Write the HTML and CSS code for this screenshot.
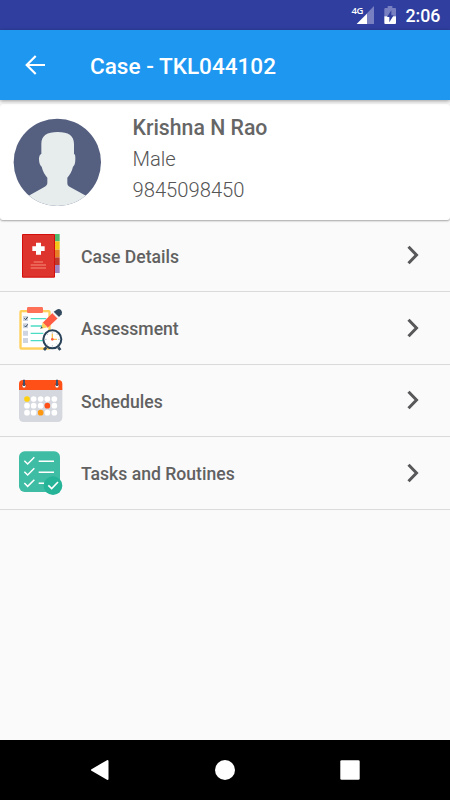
FILE: index.html
```html
<!DOCTYPE html>
<html lang="en">
<head>
<meta charset="utf-8">
<title>Case</title>
<link rel="stylesheet" href="styles.css">
</head>
<body>
<div class="screen">
  <div class="status">
    <svg class="status-icons" width="50" height="30" viewBox="0 0 150 90">
      <path d="M60 18v54H8z" fill="#7980c1"/>
      <path d="M39 41v31H8z" fill="#fff"/>
      <g transform="translate(-9)">
        <path d="M103 24h7v-6h14v6h8q3 0 3 3v22h-35V27q0-3 3-3z" fill="#7980c1"/>
        <path d="M100 49h35v20q0 3-3 3h-29q-3 0-3-3z" fill="#fff"/>
        <path d="m121 31-13 20h7v16l13-21h-7z" fill="#303f9f"/>
      </g>
    </svg>
    <span class="network">4G</span>
    <span class="clock">2:06</span>
  </div>
  <header class="appbar">
    <svg class="back" width="20" height="20" viewBox="0 0 20 20" fill="none" stroke="#fff" stroke-width="2.2"><path d="M20 10H2M10.700 1 1.700 10l9 9"/></svg>
    <h1>Case - TKL044102</h1>
  </header>
  <section class="card">
    <svg class="avatar" width="88" height="88" viewBox="0 0 264 264">
      <clipPath id="face"><circle cx="133" cy="133" r="131"/></clipPath>
      <g clip-path="url(#face)">
        <path d="M0 0h264v264H0z" fill="#556080"/>
        <path d="M85 108V78c0-25 17-36 49-36s49 11 49 36v30c4 1 4 7 4 15 0 12-2 20-7 23-3 14-10 25-17 33v15c0 6 2 10 8 13l48 26v50H49v-50H47l47-26c5-3 9-7 9-12v-16c-7-8-14-19-17-33-5-4-8-12-8-23 0-8 3-14 7-15z" fill="#e7eced"/>
      </g>
    </svg>
    <div class="person">
      <div class="name">Krishna N Rao</div>
      <div>Male</div>
      <div>9845098450</div>
    </div>
  </section>
  <nav class="menu">
    <a class="row">
      <svg class="icon" width="60" height="60" viewBox="0 0 180 180">
        <path d="M133 27h16v22h-16z" fill="#4fba6f"/><path d="M133 49h16v25h-16z" fill="#f0c419"/><path d="M133 74h16v23h-16z" fill="#e57e25"/><path d="M133 97h16v23h-16z" fill="#c03a2b"/><path d="M133 120h16v24h-16z" fill="#a184c0"/>
        <path d="M37.500 28.500h96v128h-96z" fill="#dd352e" stroke="#d40e0a" stroke-width="3"/>
        <path d="M78 53h15v11h11v14H93v11H78V78H67V64h11z" fill="#fff"/>
        <path d="M71 111h28M62 120h46M62 129h46" stroke="#ed7161" stroke-width="4.500"/>
      </svg>
      <span>Case Details</span>
      <svg class="chevron" width="12" height="20" viewBox="0 0 12 20"><path d="m1.500 1.700 8 8.300-8 8.300"/></svg>
    </a>
    <a class="row tall">
      <svg class="icon" width="60" height="60" viewBox="0 0 180 180">
        <rect x="28" y="36" width="94" height="119" rx="6" fill="#ffd15c"/>
        <path d="M35 43h80v105H35z" fill="#fff"/>
        <rect x="51" y="27" width="48" height="18" rx="4" fill="#ff7058"/>
        <path d="M39 54h15v15H39zM39 76h15v15H39zM39 98h15v15H39zM39 120h15v15H39z" fill="#ced5e0"/>
        <path d="m43 61 4 4 6-8M43 83l4 4 6-8" fill="none" stroke="#334a5e" stroke-width="3"/>
        <path d="M62 62h47M62 84h47M62 106h38M62 128h38" stroke="#4cdbc4" stroke-width="4"/>
        <path d="m128 44 16 16-31 29-15-15z" fill="#ff5b42"/>
        <path d="m98 73 15 15-19 4z" fill="#ffd15c"/>
        <path d="m90 92 5-7 3 5z" fill="#334a5e"/>
        <path d="m127 46 5-5 16 16-5 5z" fill="#f2f2f2"/>
        <path d="m131 41 9-6q7-4 13 1 6 7 2 13l-8 8z" fill="#334a5e"/>
        <path d="m109 148-7 8M145 148l6 8" stroke="#334a5e" stroke-width="8"/>
        <circle cx="127" cy="124" r="27" fill="#fff" stroke="#294257" stroke-width="6"/>
        <path d="M127 102v5M127 141v5M105 124h5M144 124h5M111 108l3 3M140 137l3 3M143 108l-3 3M111 140l3-3" stroke="#9aa6b2" stroke-width="2"/>
        <path d="M127 107v17h14" fill="none" stroke="#ffc052" stroke-width="4"/>
        <circle cx="127" cy="124" r="4" fill="#ff5b42"/>
      </svg>
      <span>Assessment</span>
      <svg class="chevron" width="12" height="20" viewBox="0 0 12 20"><path d="m1.500 1.700 8 8.300-8 8.300"/></svg>
    </a>
    <a class="row">
      <svg class="icon" width="60" height="60" viewBox="0 0 180 180">
        <path d="M27 58h130v84q0 14-14 14H41q-14 0-14-14z" fill="#d5d8de"/>
        <path d="M27 60V42q0-12 12-12h106q12 0 12 12v18z" fill="#ff5017"/>
        <g fill="#c33712"><circle cx="42" cy="46" r="7"/><circle cx="141" cy="46" r="7"/></g>
        <g fill="#fff"><circle cx="42" cy="48" r="5"/><circle cx="141" cy="48" r="5"/></g>
        <path d="M42 29v19M141 29v19" stroke="#43506a" stroke-width="6"/>
        <g fill="#fff"><circle cx="71" cy="87" r="8.500"/><circle cx="92" cy="87" r="8.500"/><circle cx="112" cy="87" r="8.500"/><circle cx="133" cy="87" r="8.500"/><circle cx="51" cy="107" r="8.500"/><circle cx="71" cy="107" r="8.500"/><circle cx="92" cy="107" r="8.500"/><circle cx="133" cy="107" r="8.500"/><circle cx="51" cy="128" r="8.500"/><circle cx="71" cy="128" r="8.500"/><circle cx="112" cy="128" r="8.500"/><circle cx="133" cy="128" r="8.500"/></g>
        <circle cx="51" cy="87" r="8.500" fill="#ffd00d"/><circle cx="112" cy="107" r="8.500" fill="#ff5017"/><circle cx="92" cy="128" r="8.500" fill="#ff9811"/>
      </svg>
      <span>Schedules</span>
      <svg class="chevron" width="12" height="20" viewBox="0 0 12 20"><path d="m1.500 1.700 8 8.300-8 8.300"/></svg>
    </a>
    <a class="row tall">
      <svg class="icon" width="60" height="60" viewBox="0 0 180 180">
        <rect x="27" y="25" width="123" height="122" rx="17" fill="#3fbca4"/>
        <path d="m43 53 10 10 20-20M43 86l10 10 20-20M43 120l10 10 20-20" fill="none" stroke="#fff" stroke-width="4.500"/>
        <path d="M86 55h46M86 88h46M86 121h17" stroke="#fff" stroke-width="4.500"/>
        <circle cx="129" cy="128" r="28" fill="#25b498"/>
        <path d="m115 127 10 10 19-20" fill="none" stroke="#fff" stroke-width="5"/>
      </svg>
      <span>Tasks and Routines</span>
      <svg class="chevron" width="12" height="20" viewBox="0 0 12 20"><path d="m1.500 1.700 8 8.300-8 8.300"/></svg>
    </a>
  </nav>
  <footer class="navbar">
    <svg width="20" height="22" viewBox="0 0 20 22"><path d="M17.500 2v18L2 11z" fill="#fff" stroke="#fff" stroke-width="2" stroke-linejoin="round"/></svg>
    <svg width="20" height="22" viewBox="0 0 20 22"><circle cx="10" cy="11" r="10" fill="#fff"/></svg>
    <svg width="20" height="22" viewBox="0 0 20 22"><rect x=".3" y="1.300" width="19.400" height="19.400" rx="1.300" fill="#fff"/></svg>
  </footer>
</div>
</body>
</html>
```
FILE: styles.css
```css
* { box-sizing: border-box; }
body { margin: 0; font-family: Roboto, "Liberation Sans", sans-serif; }
svg { display: block; flex: none; }
.screen {
  width: 450px;
  height: 800px;
  display: flex;
  flex-direction: column;
  background: #fafafa;
  overflow: hidden;
}
.status {
  position: relative;
  flex: none;
  height: 30px;
  display: flex;
  justify-content: flex-end;
  align-items: center;
  padding-right: 10px;
  background: #303f9f;
  color: #fff;
}
.network {
  position: absolute;
  left: 351.500px;
  top: 5px;
  font-family: "Open Sans", Roboto, sans-serif;
  font-size: 9.500px;
  line-height: 11px;
  font-weight: 600;
  letter-spacing: -.5px;
}
.status-icons { margin-right: 1px; }
.clock {
  width: 35px;
  white-space: nowrap;
  font-size: 17.800px;
  font-weight: 500;
  line-height: 30px;
  padding: 2px 0 0 .4px;
}
.appbar {
  position: relative;
  flex: none;
  height: 70px;
  display: flex;
  align-items: center;
  padding-left: 25px;
  background: #1e97f1;
  color: #fff;
  box-shadow: 0 1px 4px rgba(0, 0, 0, .4);
}
h1 {
  margin: 4px 0 0 45px;
  font-size: 22.550px;
  line-height: 30px;
  font-weight: 500;
}
.card {
  flex: none;
  height: 116px;
  margin-top: 4px;
  display: flex;
  padding: 14px 0 0 13px;
  background: #fff;
  border-radius: 3px;
  box-shadow: 0 1px 2px rgba(0, 0, 0, .35);
}
.person {
  margin: -5px 0 0 31.500px;
  font-size: 20.200px;
  line-height: 31px;
  font-weight: 300;
  color: #555;
}
.person .name {
  font-size: 21.250px;
  line-height: 30px;
  padding-bottom: 1px;
  font-weight: 500;
  color: #666;
}
.row {
  height: 72px;
  display: flex;
  align-items: center;
  padding: 0 31px 0 10px;
  border-bottom: 1px solid #dadada;
  color: #616161;
  font-size: 17.600px;
  font-weight: 500;
}
.row svg { margin-top: -1px; }
.row.tall { height: 73px; }
.row.tall svg { margin-top: 0; }
.row span { margin: 2px auto 0 11px; }
.chevron {
  fill: none;
  stroke: #58585a;
  stroke-width: 3;
}
.navbar {
  height: 60px;
  margin-top: auto;
  display: flex;
  align-items: center;
  justify-content: space-between;
  padding: 0 90px;
  background: #000;
}
```
